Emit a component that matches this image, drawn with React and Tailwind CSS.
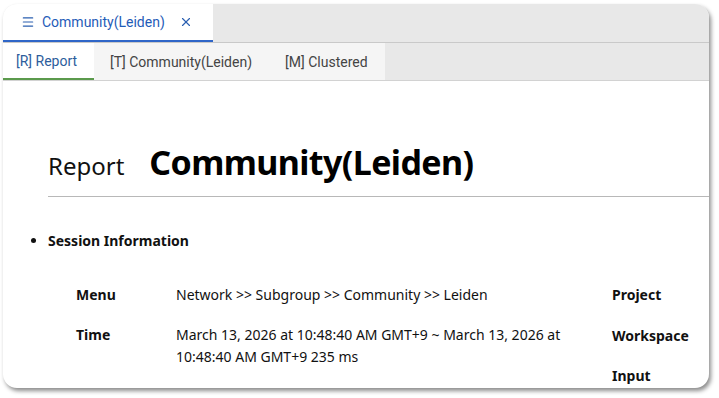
import { Menu, X } from "lucide-react";

const rows = [
    { label: "Menu", value: "Network >> Subgroup >> Community >> Leiden" },
    {
        label: "Time",
        value: "March 13, 2026 at 10:48:40 AM GMT+9 ~ March 13, 2026 at 10:48:40 AM GMT+9 235 ms",
    },
];

const sideRows = ["Project", "Workspace", "Input"];

const App = () => {
    return (
        <div className="w-[719px] h-[398px] bg-white pl-[3px] pt-[4px] overflow-hidden">
            <div className="w-[706px] h-[384px] rounded-[14px] bg-white shadow-[2px_3px_4px_rgba(0,0,0,0.45)] overflow-hidden flex flex-col font-['Noto_Sans',sans-serif]">
                {/* document tabs */}
                <div className="h-[39px] shrink-0 flex bg-[#e8e8e8] border-b border-[#c9c9c9] font-['Roboto',sans-serif]">
                    <div className="w-[210px] bg-white border-b-2 border-[#2f66c8] flex items-center pl-[18px] text-[#1f5cb8] text-[14px]">
                        <Menu size={14} strokeWidth={2} className="text-[#2a5fb0]" />
                        <span className="ml-[7px]">Community(Leiden)</span>
                        <X size={14} strokeWidth={2} className="ml-[14px] text-[#2a5fb0]" />
                    </div>
                </div>
                {/* sub tabs */}
                <div className="h-[38px] shrink-0 flex bg-[#e8e8e8] border-b border-[#d2d2d2] font-['Roboto',sans-serif] text-[14px]">
                    <div className="w-[91px] bg-white border-b-2 border-[#5b9a4c] flex items-center pl-[13px] pt-[2px] text-[#2d5d9c]">
                        [R] Report
                    </div>
                    <div className="w-[291px] bg-[#f5f5f5] flex items-center pt-[2px] text-[#444]">
                        <span className="pl-[16px]">[T] Community(Leiden)</span>
                        <span className="pl-[33px]">[M] Clustered</span>
                    </div>
                </div>
                {/* report body */}
                <div className="flex-1 pl-[45px] pt-[61px] text-[#111]">
                    <div className="flex items-baseline border-b border-[#b8b8b8] pb-[12px] -mr-[20px]">
                        <span className="text-[24px]">Report</span>
                        <span className="ml-[25px] text-[34px] font-bold tracking-[-0.6px] text-black leading-[40px]">Community(Leiden)</span>
                    </div>
                    <ul className="list-disc mt-[33px]">
                        <li className="text-[14px] font-bold">Session Information</li>
                    </ul>
                    <div className="flex mt-[33px] ml-[28px] text-[14px] leading-[22px]">
                        <div className="w-[536px]">
                            {rows.map((r) => (
                                <div key={r.label} className="flex pb-[18px]">
                                    <div className="w-[100px] shrink-0 font-bold">{r.label}</div>
                                    <div className="w-[400px]">{r.value}</div>
                                </div>
                            ))}
                        </div>
                        <div className="font-bold">
                            {sideRows.map((s) => (
                                <div key={s} className="h-[40.5px]">{s}</div>
                            ))}
                        </div>
                    </div>
                </div>
            </div>
        </div>
    );
};

export default App;
